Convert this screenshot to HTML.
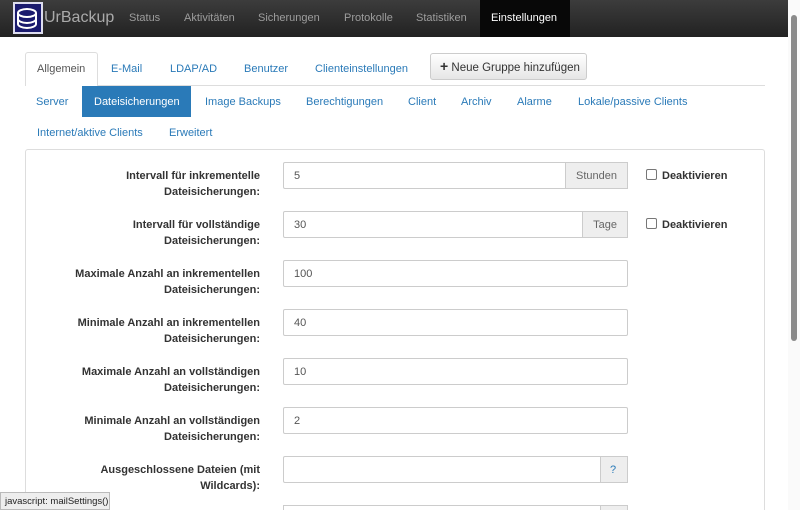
<!DOCTYPE html>
<html style="overflow:hidden;height:510px"><head><meta charset="utf-8"><style>
*{box-sizing:border-box;margin:0;padding:0}
body{width:800px;height:510px;overflow:hidden;background:#fff;font-family:"Liberation Sans",Arial,sans-serif;font-size:11px;color:#333;position:relative;white-space:nowrap}
.nav{position:absolute;left:0;top:0;width:788px;height:37px;background:linear-gradient(#3c3c3c,#222)}
.nav span{position:absolute;top:12px;color:#9d9d9d;font-size:11px}
.nav .act{position:absolute;left:480px;top:0;width:90px;height:37px;background:#080808}
.logo{position:absolute;left:13px;top:2px;width:30px;height:32px;background:#1a1a6e;border:2px solid #dde}
.a{position:absolute;color:#2a7ab8;font-size:11px}
.lbl{position:absolute;right:540px;text-align:right;font-weight:bold;font-size:11px;line-height:16px;color:#333;width:220px}
.inp{position:absolute;left:283px;width:345px;height:27px;border:1px solid #ccc;border-radius:2px;padding:7px 10px;font-size:11px;color:#555}
.add{position:absolute;top:-1px;right:-1px;height:27px;border:1px solid #ccc;background:#eee;color:#666;padding:7px 10px;font-size:11px}
.chk{position:absolute;left:646px;font-weight:bold;font-size:11px}
.chk i{display:inline-block;width:11px;height:11px;border:1px solid #777;border-radius:2px;vertical-align:-1px;margin-right:5px}
</style></head><body>
<div class="nav">
<div class="act"></div>
<div class="logo"><svg width="26" height="28" viewBox="0 0 26 28" style="position:absolute;left:0;top:0"><g fill="none" stroke="#fff" stroke-width="2"><ellipse cx="12" cy="9" rx="9" ry="4"/><path d="M3 9v11c0 2 4 4 9 4s9-2 9-4V9M3 15c0 2 4 4 9 4s9-2 9-4"/></g></svg></div>
<span style="left:44px;top:9px;font-size:16px;color:#aaa">UrBackup</span>
<span style="left:129px">Status</span>
<span style="left:184px">Aktivitäten</span>
<span style="left:258px">Sicherungen</span>
<span style="left:344px">Protokolle</span>
<span style="left:416px">Statistiken</span>
<span style="left:491px;color:#fff">Einstellungen</span>
</div>
<div style="position:absolute;left:788px;top:0;width:12px;height:510px;background:#fafafa"></div>
<div style="position:absolute;left:791px;top:15px;width:6px;height:326px;background:#8a8a8a;border-radius:3px"></div>
<div style="position:absolute;left:25px;top:85px;width:740px;height:1px;background:#ddd"></div>
<div style="position:absolute;left:25px;top:52px;width:73px;height:34px;border:1px solid #ddd;border-bottom:none;background:#fff;border-radius:3px 3px 0 0"></div>
<div class="a" style="left:37px;top:63px;color:#555">Allgemein</div>
<div class="a" style="left:111px;top:63px">E-Mail</div>
<div class="a" style="left:170px;top:63px">LDAP/AD</div>
<div class="a" style="left:244px;top:63px">Benutzer</div>
<div class="a" style="left:315px;top:63px">Clienteinstellungen</div>
<div style="position:absolute;left:430px;top:53px;width:157px;height:27px;border:1px solid #ccc;border-radius:3px;background:linear-gradient(#fff,#e6e6e6);font-size:11.5px;padding:6px 9px;color:#333"><b style="font-size:14px;line-height:12px">+</b> Neue Gruppe hinzufügen</div>
<div style="position:absolute;left:82px;top:86px;width:109px;height:31px;background:#2a7ab8"></div>
<div class="a" style="left:36px;top:96px">Server</div>
<div class="a" style="left:94px;top:96px;color:#fff">Dateisicherungen</div>
<div class="a" style="left:205px;top:96px">Image Backups</div>
<div class="a" style="left:306px;top:96px">Berechtigungen</div>
<div class="a" style="left:408px;top:96px">Client</div>
<div class="a" style="left:461px;top:96px">Archiv</div>
<div class="a" style="left:517px;top:96px">Alarme</div>
<div class="a" style="left:578px;top:96px">Lokale/passive Clients</div>
<div class="a" style="left:37px;top:127px">Internet/aktive Clients</div>
<div class="a" style="left:169px;top:127px">Erweitert</div>
<div style="position:absolute;left:25px;top:149px;width:740px;height:361px;border:1px solid #ddd;border-bottom:none;border-radius:3px 3px 0 0"></div>

<div class="lbl" style="top:168px">Intervall für inkrementelle<br>Dateisicherungen:</div>
<div class="inp" style="top:162px">5<div class="add">Stunden</div></div>
<div class="chk" style="top:169px"><i></i>Deaktivieren</div>

<div class="lbl" style="top:217px">Intervall für vollständige<br>Dateisicherungen:</div>
<div class="inp" style="top:211px">30<div class="add">Tage</div></div>
<div class="chk" style="top:218px"><i></i>Deaktivieren</div>

<div class="lbl" style="top:266px">Maximale Anzahl an inkrementellen<br>Dateisicherungen:</div>
<div class="inp" style="top:260px">100</div>
<div class="lbl" style="top:315px">Minimale Anzahl an inkrementellen<br>Dateisicherungen:</div>
<div class="inp" style="top:309px">40</div>
<div class="lbl" style="top:364px">Maximale Anzahl an vollständigen<br>Dateisicherungen:</div>
<div class="inp" style="top:358px">10</div>
<div class="lbl" style="top:413px">Minimale Anzahl an vollständigen<br>Dateisicherungen:</div>
<div class="inp" style="top:407px">2</div>
<div class="lbl" style="top:462px">Ausgeschlossene Dateien (mit<br>Wildcards):</div>
<div class="inp" style="top:456px"><div class="add" style="color:#2a7ab8;width:28px;padding:7px 9px">?</div></div>
<div style="position:absolute;left:283px;top:505px;width:345px;height:5px;border:1px solid #ccc;border-bottom:none"><div style="position:absolute;right:-1px;top:-1px;width:28px;height:5px;background:#eee;border:1px solid #ccc;border-bottom:none"></div></div>
<div style="position:absolute;left:0;top:492px;width:110px;height:18px;background:#eee;border:1px solid #bbb;font-size:9.5px;padding:3px 4px;color:#222">javascript: mailSettings()</div>
</body></html>
